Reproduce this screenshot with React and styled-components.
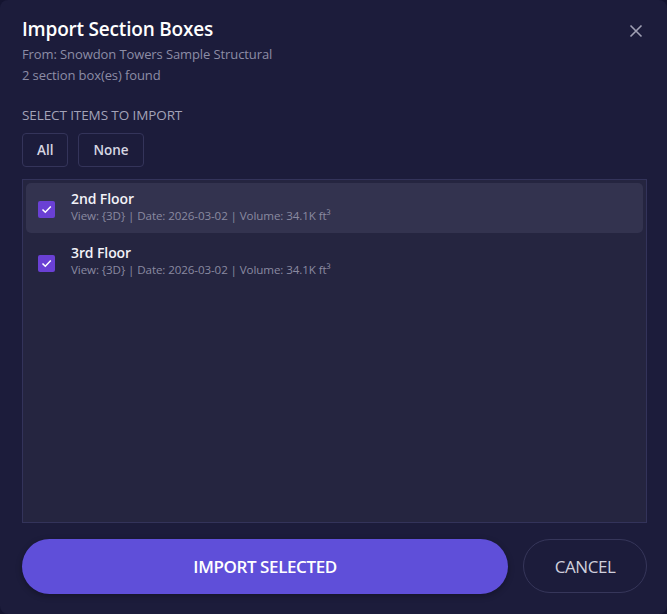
import React from "react";
import styled, { createGlobalStyle } from "styled-components";

const GlobalStyle = createGlobalStyle`
  html, body {
    margin: 0;
    padding: 0;
    background: #141430;
  }
  * {
    box-sizing: border-box;
  }
`;

const Dialog = styled.div`
  width: 667px;
  height: 614px;
  background: #1c1c3b;
  border-radius: 8px;
  padding: 16px 20px 20px 22px;
  display: flex;
  flex-direction: column;
  font-family: "Open Sans", "Noto Sans", sans-serif;
  color: #ffffff;
`;

const Header = styled.div`
  display: flex;
  justify-content: space-between;
  align-items: flex-start;
`;

const Title = styled.h2`
  margin: 0 0 2px;
  font-size: 19px;
  font-weight: 600;
  line-height: 26px;
  letter-spacing: -0.2px;
`;

const Sub = styled.div`
  font-size: 13px;
  color: #8d8da6;
  line-height: 21px;
  letter-spacing: -0.1px;
`;

const CloseButton = styled.button`
  background: none;
  border: none;
  padding: 0;
  margin: 8px 4px 0 0;
  color: #a0a0b4;
  cursor: pointer;
  display: flex;
`;

const SectionLabel = styled.div`
  margin-top: 20px;
  font-size: 13.5px;
  font-weight: 500;
  color: #a3a3b8;
  text-transform: uppercase;
  letter-spacing: -0.1px;
`;

const Toggles = styled.div`
  display: flex;
  gap: 10px;
  margin-top: 9px;
`;

const SmallButton = styled.button`
  height: 34px;
  padding: 0 ${(p) => p.$pad}px;
  background: transparent;
  border: 1px solid #34345a;
  border-radius: 4px;
  color: #d6d6e2;
  font-family: inherit;
  font-size: 13.5px;
  font-weight: 600;
  cursor: pointer;
`;

const List = styled.div`
  margin-top: 12px;
  height: 345px;
  width: 625px;
  background: #252540;
  border: 1px solid #33335a;
  padding: 3px;
  display: flex;
  flex-direction: column;
  gap: 4px;
`;

const Row = styled.label`
  display: flex;
  align-items: center;
  height: 50px;
  padding: 0 12px 3px;
  gap: 16px;
  border-radius: 5px;
  background: ${(p) => (p.$active ? "#33334f" : "transparent")};
  cursor: pointer;
`;

const Check = styled.span`
  width: 17px;
  height: 17px;
  margin-top: 5px;
  border-radius: 2px;
  background: #6a40d4;
  display: flex;
  align-items: center;
  justify-content: center;
  flex-shrink: 0;
`;

const RowText = styled.div`
  display: flex;
  flex-direction: column;
`;

const RowTitle = styled.div`
  font-size: 14px;
  font-weight: 600;
  line-height: 19px;
  color: #f2f2f8;
  letter-spacing: -0.1px;
`;

const RowMeta = styled.div`
  font-size: 11.6px;
  color: #8a8aa0;
  line-height: 16px;
  letter-spacing: -0.1px;
`;

const Footer = styled.div`
  display: flex;
  gap: 15px;
  margin-top: 16px;
`;

const PrimaryButton = styled.button`
  width: 487px;
  height: 55px;
  border-radius: 28px;
  border: none;
  background: #5f4fd9;
  color: #ffffff;
  font-family: inherit;
  font-size: 17px;
  font-weight: 600;
  letter-spacing: -0.4px;
  box-shadow: 0 2px 6px rgba(0, 0, 0, 0.3);
  cursor: pointer;
`;

const GhostButton = styled.button`
  width: 124px;
  height: 54px;
  border-radius: 27px;
  border: 1px solid #36365a;
  background: transparent;
  color: #cfcfdc;
  font-family: inherit;
  font-size: 17px;
  font-weight: 500;
  letter-spacing: -0.4px;
  cursor: pointer;
`;

const items = [
  { name: "2nd Floor", active: true },
  { name: "3rd Floor", active: false },
];

export default function App() {
  return (
    <>
      <GlobalStyle />
      <Dialog>
        <Header>
          <div>
            <Title>Import Section Boxes</Title>
            <Sub>From: Snowdon Towers Sample Structural</Sub>
            <Sub>2 section box(es) found</Sub>
          </div>
          <CloseButton>
            <svg width="14" height="14" viewBox="0 0 14 14">
              <path d="M1.5 1.5l11 11M12.5 1.5l-11 11" stroke="currentColor" strokeWidth="1.6" />
            </svg>
          </CloseButton>
        </Header>
        <SectionLabel>Select items to import</SectionLabel>
        <Toggles>
          <SmallButton $pad={14}>All</SmallButton>
          <SmallButton $pad={14}>None</SmallButton>
        </Toggles>
        <List>
          {items.map((it) => (
            <Row key={it.name} $active={it.active}>
              <Check>
                <svg width="13" height="13" viewBox="0 0 13 13">
                  <path d="M2.5 6.5l2.8 2.8L10.8 3.6" fill="none" stroke="#fff" strokeWidth="1.5" />
                </svg>
              </Check>
              <RowText>
                <RowTitle>{it.name}</RowTitle>
                <RowMeta>View: {"{3D}"} | Date: 2026-03-02 | Volume: 34.1K ft³</RowMeta>
              </RowText>
            </Row>
          ))}
        </List>
        <Footer>
          <PrimaryButton>IMPORT SELECTED</PrimaryButton>
          <GhostButton>CANCEL</GhostButton>
        </Footer>
      </Dialog>
    </>
  );
}
